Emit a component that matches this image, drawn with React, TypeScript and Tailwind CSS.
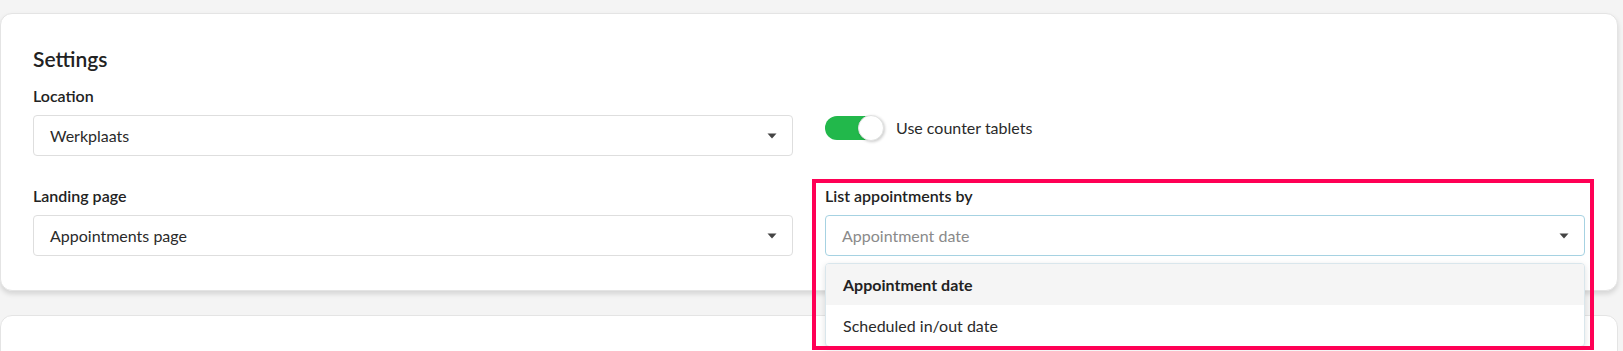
import React from "react";

function Caret() {
  return (
    <svg width="10" height="6" viewBox="0 0 10 6" className="shrink-0">
      <path d="M0.5 0.5 L9.5 0.5 L5 5.5 Z" fill="#444444" />
    </svg>
  );
}

function Select({ value, placeholder, focused }: { value: string; placeholder?: boolean; focused?: boolean }) {
  return (
    <div
      className={
        "flex h-[41px] items-center justify-between rounded-[4px] border bg-white pl-[16px] pr-[15px] " +
        (focused ? "border-[#a6d2e2]" : "border-[#dedede]")
      }
    >
      <span className={"text-[16px] leading-[20px] " + (placeholder ? "text-[#8a8a8a]" : "text-[#2a2a2a]")}>{value}</span>
      <Caret />
    </div>
  );
}

export default function App() {
  return (
    <div className="min-h-screen overflow-hidden bg-[#f4f4f4] pt-[13px] pr-[5px]" style={{ fontFamily: "Lato, 'Open Sans', sans-serif" }}>
      <div className="rounded-[12px] border border-[#e4e4e4] bg-white px-[32px] pb-[34px] pt-[31px] shadow-[0_3px_5px_rgba(0,0,0,0.13)]">
        <h2 className="text-[21px] font-semibold leading-[28px] text-[#222]">Settings</h2>
        <div className="mt-[11px] grid grid-cols-2 gap-x-[32px] gap-y-[28px]">
          <div>
            <div className="mb-[7px] text-[16px] font-semibold leading-[24px] text-[#222]">Location</div>
            <Select value="Werkplaats" />
          </div>
          <div className="pt-[32px]">
            <div className="flex items-center">
              <div className="relative h-[24px] w-[58px] rounded-full bg-[#22b84b]">
                <div className="absolute right-[-1px] top-[-1px] h-[26px] w-[26px] rounded-full border border-[#e2e2e2] bg-white shadow-[1px_1px_3px_rgba(0,0,0,0.2)]" />
              </div>
              <span className="ml-[13px] text-[16px] leading-[24px] text-[#2a2a2a]">Use counter tablets</span>
            </div>
          </div>
          <div>
            <div className="mb-[7px] text-[16px] font-semibold leading-[24px] text-[#222]">Landing page</div>
            <Select value="Appointments page" />
          </div>
          <div className="relative">
            <div className="mb-[7px] text-[16px] font-semibold leading-[24px] text-[#222]">List appointments by</div>
            <Select value="Appointment date" placeholder focused />
            <div className="absolute left-0 right-0 top-full z-20 mt-[7px] overflow-hidden rounded-[4px] border border-[#d9e6ec] bg-white shadow-[0_2px_6px_rgba(0,0,0,0.12)]">
              <div className="flex h-[41px] items-center bg-[#f5f5f5] pl-[17px] text-[16px] font-bold text-[#222]">Appointment date</div>
              <div className="flex h-[41px] items-center pl-[17px] text-[16px] text-[#2a2a2a]">Scheduled in/out date</div>
            </div>
            <div className="pointer-events-none absolute left-[-13px] right-[-9px] top-[-5px] z-30 h-[171px] border-[4px] border-[#ff0055]" />
          </div>
        </div>
      </div>
      <div className="mt-[24px] h-[120px] rounded-[12px] border border-[#e4e4e4] bg-white" />
    </div>
  );
}
